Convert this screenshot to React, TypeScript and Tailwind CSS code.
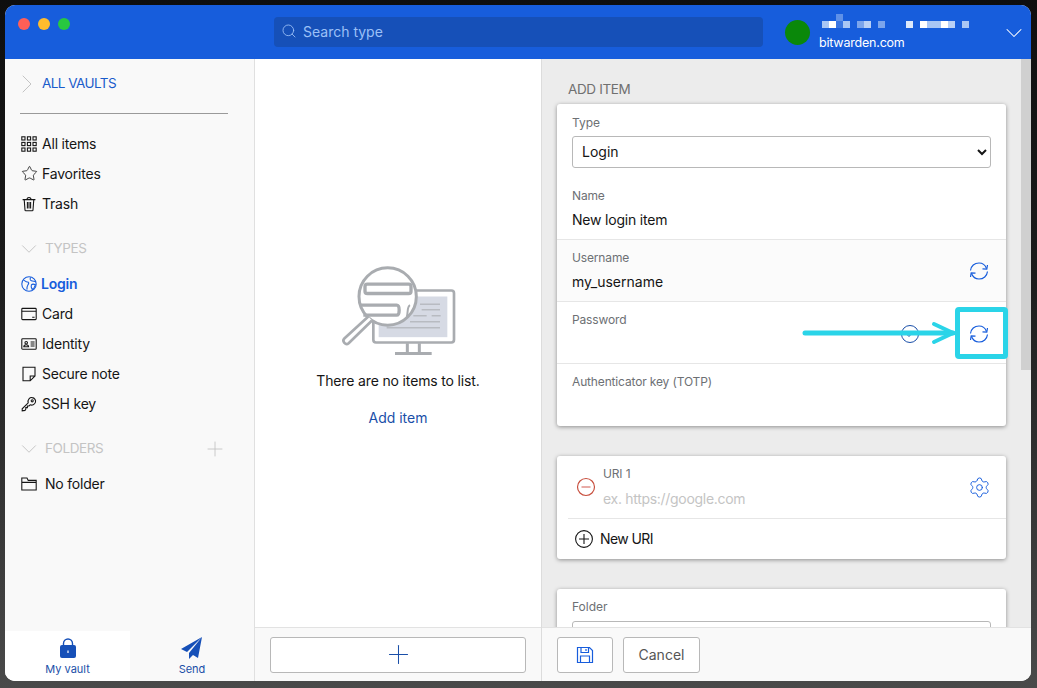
import { ReactNode } from "react";
import { Search, ChevronDown, ChevronRight, Plus, Star, Settings } from "lucide-react";

// Иконки в стиле bwi: тонкая обводка 20x20
function Ico({ children, size = 16, className = "" }: { children: ReactNode; size?: number; className?: string }) {
  return (
    <svg width={size} height={size} viewBox="0 0 20 20" fill="none" stroke="currentColor" strokeWidth="1.35" className={`shrink-0 ${className}`}>
      {children}
    </svg>
  );
}

const GridIcon = () => (
  <Ico>
    {[1, 8, 15].map((x) =>
      [1, 8, 15].map((y) => <rect key={`${x}-${y}`} x={x} y={y} width="4" height="4" />)
    )}
  </Ico>
);
const TrashIcon = () => (
  <Ico>
    <path d="M2 4.500h16M7.500 4.500c0-3.500 5-3.500 5 0M4 4.500l1 13c0 .6.500 1 1 1h8c.500 0 1-.4 1-1l1-13M8 7.500v8M10 7.500v8M12 7.500v8" />
  </Ico>
);
const GlobeIcon = () => (
  <Ico className="text-[#175ddc]">
    <circle cx="10" cy="10" r="9" />
    <path d="M3 5c2 1 3 2.500 5 2.500S10 9 9 10.500 7 13 7.500 17M12 2c-1 2-1 3 1 4s4 0 5 1M13 11c1-1 3-1 5 0-1 3-2 5-4 6-1-2-2-4-1-6z" />
  </Ico>
);
const CardIcon = () => (
  <Ico>
    <rect x="1" y="3" width="18" height="14" rx="1" />
    <path d="M1 6.500h18M14 14h3" />
  </Ico>
);
const IdIcon = () => (
  <Ico>
    <rect x="1" y="3.500" width="18" height="13" rx="1" />
    <circle cx="6.500" cy="8.500" r="1.600" />
    <path d="M3.500 13.500c0-3.500 6-3.500 6 0zM12 7.500h5M12 10h5M12 12.500h5" />
  </Ico>
);
const NoteIcon = () => (
  <Ico>
    <path d="M2.500 1.500h15v11l-6 6h-9zM17.500 12.500h-6v6" />
  </Ico>
);
const KeyIcon = () => (
  <Ico>
    <path d="M1.500 18.500v-2.500l7.500-7.500c-1-4 2-7 5-6.500 3 .3 5 3.500 4 6-1 2.800-4 4-6.500 3l-1.500 1.500h-2v2h-2v2l-1 1.500z" />
    <circle cx="14" cy="6" r="1.300" />
  </Ico>
);
const FolderIcon = () => (
  <Ico>
    <path d="M1 17.500V2.500h6.500L9 5.500h10v12zM1 8h18" />
  </Ico>
);

// Две дуги со стрелками, как у генератора пароля
const SyncIcon = () => (
  <svg width="20" height="20" viewBox="0 0 20 20" fill="none" stroke="#175ddc" strokeWidth="1.200" className="shrink-0">
    <path d="M1.500 9.500C2 5 5.500 2 10 2c3.500 0 6.200 2 7.500 5.500" />
    <path d="M18.500 10.500C18 15 14.500 18 10 18c-3.500 0-6.200-2-7.500-5.500" />
    <path d="M13.500 7.800l4.300.4.700-4.200" />
    <path d="M6.500 12.200l-4.300-.4-.7 4.200" />
  </svg>
);

function SideRow({ icon, label, active, gap = "gap-[5px]" }: { icon: ReactNode; label: string; active?: boolean; gap?: string }) {
  return (
    <div className={`flex h-[30px] items-center pb-[1px] pl-[16px] tracking-[-0.2px] ${gap} ${active ? "font-semibold text-[#175ddc]" : "text-[#151515]"}`}>
      {icon}
      <span>{label}</span>
    </div>
  );
}

function SectionHead({ label, action }: { label: string; action?: ReactNode }) {
  return (
    <div className="flex h-[30px] items-center pb-[1px] pl-[17px] pr-[27px] text-[#c4c4c4]">
      <ChevronDown size={26} strokeWidth={0.9} className="-ml-[6px] -mr-[6px] shrink-0" />
      <span className="ml-[9px] flex-1 text-[13.500px] tracking-[-0.4px]">{label}</span>
      {action}
    </div>
  );
}

function Field({ label, value, icons, tint, last, valueClass = "" }: { label: string; value?: string; icons?: ReactNode; tint?: boolean; last?: boolean; valueClass?: string }) {
  return (
    <div className={`flex h-[62px] items-center pl-[15px] pr-[17px] ${tint ? "bg-[#fbfbfb]" : ""} ${last ? "" : "border-b border-[#e6e6e6]"}`}>
      <div className="flex-1 self-start pt-[9px]">
        <div className="text-[12px] leading-[17px] tracking-[-0.15px] text-[#6d7074]">{label}</div>
        <div className={`mt-[6px] h-[20px] leading-[20px] text-[#151515] ${valueClass}`}>{value}</div>
      </div>
      {icons}
    </div>
  );
}

function Illustration() {
  return (
    <svg width="120" height="97" viewBox="120 40 360 290" fill="none" stroke="#a9acb0" strokeWidth="9" className="ml-[4px]">
      <rect x="220" y="122" width="242" height="156" rx="8" strokeWidth="8" />
      <rect x="236" y="140" width="206" height="122" fill="#d6dae4" stroke="none" />
      <path d="M322 280v30M358 280v30M285 311h110" />
      <path d="M360 163h60M365 180h55M340 198h40M395 198h27M330 216h90M260 234h160" stroke="#a9acb0" strokeWidth="3" />
      <circle cx="263" cy="140" r="86" fill="#fff" />
      <path d="M205 200l-72 66c-8 8 4 22 13 14l70-68" strokeWidth="8" fill="#fff" />
      <rect x="195" y="103" width="138" height="28" rx="7" strokeWidth="10" />
      <path d="M180 166h110c10 0 10 30 0 30h-100" strokeWidth="10" />
      <path d="M330 166c-10 5-5 25-10 35" strokeWidth="6" />
    </svg>
  );
}

export default function App() {
  return (
    <div className="relative h-[688px] w-[1037px] overflow-hidden bg-[linear-gradient(180deg,#0e0e0e_0px,#1c1c1c_40%,#4a4a4a_100%)] pb-[7px] pl-[5px] pr-[6px] pt-[5px] text-[14px] [font-family:Inter,sans-serif]">
      <div className="flex h-full flex-col overflow-hidden rounded-[10px] bg-white">
        {/* Header */}
        <header className="flex h-[54px] shrink-0 items-center bg-[#175ddc]">
          <div className="flex h-full w-[269px] shrink-0 gap-[8px] pl-[13px] pt-[13px]">
            <span className="h-[12px] w-[12px] rounded-full bg-[#ff5f57]" />
            <span className="h-[12px] w-[12px] rounded-full bg-[#febc2e]" />
            <span className="h-[12px] w-[12px] rounded-full bg-[#28c840]" />
          </div>
          <div className="flex h-[30px] w-[489px] shrink-0 items-center gap-[6px] rounded-[4px] bg-[#1650b8] pb-[2px] pl-[7px] text-[#9cc0f7]">
            <Search size={16} strokeWidth={1.300} />
            <span>Search type</span>
          </div>
          <div className="ml-[22px] h-[25px] w-[25px] shrink-0 rounded-full bg-[#0a880a]" />
          <div className="ml-[9px] flex-1">
            <svg width="150" height="14" viewBox="0 0 150 14" className="block">
              <rect x="3" y="7" width="7" height="7" fill="#a9c6f4" />
              <rect x="10" y="7" width="7" height="7" fill="#ffffff" />
              <rect x="17" y="0" width="7" height="7" fill="#5f91e8" />
              <rect x="17" y="7" width="7" height="7" fill="#3a76e2" />
              <rect x="24" y="7" width="7" height="7" fill="#a9c6f4" />
              <rect x="38" y="7" width="7" height="7" fill="#7ca5ec" />
              <rect x="45" y="7" width="7" height="7" fill="#b9d0f6" />
              <rect x="59" y="7" width="7" height="7" fill="#7ca5ec" />
              <rect x="87" y="7" width="7" height="7" fill="#dce8fb" />
              <rect x="101" y="7" width="7" height="7" fill="#ffffff" />
              <rect x="108" y="7" width="14" height="7" fill="#a9c6f4" />
              <rect x="122" y="7" width="7" height="7" fill="#ffffff" />
              <rect x="129" y="7" width="7" height="7" fill="#b9d0f6" />
              <rect x="143" y="7" width="7" height="7" fill="#a9c6f4" />
            </svg>
            <div className="mt-[6px] text-[12.500px] leading-[17px] tracking-[-0.2px] text-white">bitwarden.com</div>
          </div>
          <ChevronDown size={28} strokeWidth={0.9} className="mr-[3px] mt-[1px] text-white" />
        </header>

        <div className="flex min-h-0 flex-1">
          {/* Sidebar */}
          <aside className="flex w-[250px] shrink-0 flex-col border-r border-[#e0e0e0] bg-[#f9f9f9]">
            <div className="flex h-[50px] items-center pb-[1px] pl-[15px] text-[#1a5ccb]">
              <ChevronRight size={32} strokeWidth={0.75} className="-mx-[9px] shrink-0 text-[#c4c4c4]" />
              <span className="ml-[8px] text-[13.500px] tracking-[-0.55px]">ALL VAULTS</span>
            </div>
            <div className="ml-[15px] mt-[4px] h-px w-[208px] bg-[#9a9a9a]" />
            <div className="mt-[15px]">
              <SideRow icon={<GridIcon />} label="All items" />
              <SideRow icon={<Star size={17} strokeWidth={1.100} className="shrink-0" />} label="Favorites" gap="gap-[4px]" />
              <SideRow icon={<TrashIcon />} label="Trash" />
            </div>
            <div className="mt-[15px]">
              <SectionHead label="TYPES" />
            </div>
            <div className="mt-[5px]">
              <SideRow icon={<GlobeIcon />} label="Login" active gap="gap-[4px]" />
              <SideRow icon={<CardIcon />} label="Card" />
              <SideRow icon={<IdIcon />} label="Identity" />
              <SideRow icon={<NoteIcon />} label="Secure note" />
              <SideRow icon={<KeyIcon />} label="SSH key" />
            </div>
            <div className="mt-[15px]">
              <SectionHead label="FOLDERS" action={<Plus size={24} strokeWidth={0.9} className="shrink-0" />} />
            </div>
            <div className="mt-[5px]">
              <SideRow icon={<FolderIcon />} label="No folder" gap="gap-[8px]" />
            </div>
            <nav className="mt-auto flex h-[50px] text-[11px] text-[#1a4fa8]">
              <div className="flex w-[125px] flex-col items-center justify-end bg-white pb-[4px]">
                <svg width="18" height="22" viewBox="0 0 18 22" className="mb-[3px]">
                  <path d="M4.500 9V6.500a4.500 4.500 0 0 1 9 0V9" fill="none" stroke="#1650b8" strokeWidth="1.400" />
                  <rect x="1" y="8" width="16" height="13" rx="2" fill="#1650b8" />
                  <rect x="8.400" y="13.500" width="1.200" height="2.500" fill="#fff" />
                </svg>
                <span className="leading-[15px]">My vault</span>
              </div>
              <div className="flex flex-1 flex-col items-center justify-end pb-[4px]">
                <svg width="22" height="22" viewBox="0 0 22 22" className="mb-[3px]">
                  <path d="M21 0L0 12l6 3zM21 0L8 16v6l4-4 5 3z" fill="#1650b8" />
                </svg>
                <span className="leading-[15px]">Send</span>
              </div>
            </nav>
          </aside>

          {/* Item list */}
          <section className="flex w-[286px] shrink-0 flex-col">
            <div className="flex flex-1 flex-col items-center pt-[204px]">
              <Illustration />
              <div className="mt-[11px] leading-[20px] tracking-[-0.15px] text-[#151515]">There are no items to list.</div>
              <div className="mt-[17px] leading-[20px] text-[#1a4fa8]">Add item</div>
            </div>
            <div className="flex h-[54px] shrink-0 items-center border-t border-[#e2e2e2] bg-[#f9f9f9] px-[15px]">
              <div className="flex h-[36px] flex-1 items-center justify-center rounded-[3px] border border-[#b8b8b8] bg-white text-[#1a4fa8]">
                <Plus size={31} strokeWidth={0.8} />
              </div>
            </div>
          </section>

          {/* Add item pane */}
          <section className="flex min-w-0 flex-1 flex-col border-l border-[#dcdcdc] bg-[#ececec]">
            <div className="flex min-h-0 flex-1">
              <div className="min-w-0 flex-1 overflow-hidden pl-[15px] pr-[15px]">
                <div className="mt-[20px] h-[20px] pl-[11px] text-[13.500px] leading-[20px] tracking-[-0.35px] text-[#707070]">ADD ITEM</div>
                <div className="mt-[5px] overflow-hidden rounded-[3px] bg-white shadow-[0_1px_4px_rgba(0,0,0,0.4)]">
                  <div className="h-[74px] px-[15px] pt-[10px]">
                    <div className="text-[12px] leading-[17px] text-[#6d7074]">Type</div>
                    <select defaultValue="Login" className="mt-[5px] h-[32px] w-full appearance-auto rounded-[3px] border border-[#b8b8b8] bg-white pb-[1px] pl-[5px] text-[14px] text-[#151515]">
                      <option>Login</option>
                    </select>
                  </div>
                  <Field label="Name" value="New login item" valueClass="tracking-[-0.2px]" />
                  <Field label="Username" value="my_username" tint icons={<SyncIcon />} />
                  <Field
                    label="Password"
                    icons={
                      <div className="flex items-center gap-[50px] pt-[2px] text-[#1a4fa8]">
                        <svg width="18" height="18" viewBox="0 0 18 18" fill="none" stroke="currentColor" strokeWidth="1">
                          <circle cx="9" cy="9" r="8.500" />
                          <path d="M5.500 9l2.500 2.500 4.500-5" />
                        </svg>
                        <SyncIcon />
                      </div>
                    }
                  />
                  <Field label="Authenticator key (TOTP)" last />
                </div>

                <div className="mt-[30px] overflow-hidden rounded-[3px] bg-white shadow-[0_1px_4px_rgba(0,0,0,0.4)]">
                  <div className="ml-[11px] flex h-[63px] items-center border-b border-[#e6e6e6] pr-[15px]">
                    <svg width="20" height="20" viewBox="0 0 20 20" fill="none" className="ml-[8px] shrink-0">
                      <circle cx="10" cy="10" r="8.500" stroke="#c8503f" strokeWidth="1.200" />
                      <path d="M5.500 10h9" stroke="#e0908a" strokeWidth="1.500" />
                    </svg>
                    <div className="ml-[7px] flex-1 self-start pt-[9px]">
                      <div className="text-[12px] leading-[17px] tracking-[-0.15px] text-[#6d7074]">URI 1</div>
                      <div className="mt-[7px] leading-[20px] tracking-[-0.3px] text-[#c4c4c4]">ex. https://google.com</div>
                    </div>
                    <Settings size={23} strokeWidth={1} className="text-[#175ddc]" />
                  </div>
                  <div className="flex h-[40px] items-center gap-[7px] pb-[1px] pl-[18px] tracking-[-0.6px] text-[#151515]">
                    <svg width="18" height="18" viewBox="0 0 18 18" fill="none" stroke="currentColor" strokeWidth="1.100">
                      <circle cx="9" cy="9" r="8.400" />
                      <path d="M9 4v10M4 9h10" />
                    </svg>
                    <span>New URI</span>
                  </div>
                </div>

                <div className="mt-[30px] h-[100px] rounded-[3px] bg-white px-[15px] pt-[9px] shadow-[0_1px_4px_rgba(0,0,0,0.4)]">
                  <div className="text-[12px] leading-[17px] text-[#6d7074]">Folder</div>
                  <div className="mt-[6px] h-[31px] rounded-[3px] border border-[#b8b8b8]" />
                </div>
              </div>
              <div className="w-[10px] shrink-0">
                <div className="h-[311px] bg-[#d0d0d0]" />
              </div>
            </div>
            <div className="z-10 flex h-[54px] shrink-0 items-center gap-[10px] border-t border-[#e2e2e2] bg-[#f9f9f9] pl-[15px]">
              <div className="flex h-[36px] w-[56px] items-center justify-center rounded-[3px] border border-[#b8b8b8] bg-white text-[#175ddc]">
                <svg width="18" height="18" viewBox="0 0 18 18" fill="none" stroke="currentColor" strokeWidth="1.200">
                  <path d="M1.500 1.500h12l3 3v12h-15zM5 1.500v5h7.500v-5M4.500 16.500v-6.500h9v6.500M10 3v2" />
                </svg>
              </div>
              <div className="flex h-[36px] w-[77px] items-center justify-center rounded-[3px] border border-[#b8b8b8] bg-white pb-[1px] text-[#555]">Cancel</div>
            </div>
          </section>
        </div>
      </div>

      {/* Аннотация поверх скриншота */}
      <svg width="160" height="24" viewBox="0 0 160 24" fill="none" stroke="#2ad4e8" strokeLinecap="round" className="absolute left-[801px] top-[321px]">
        <path d="M4 12h148" strokeWidth="5" />
        <path d="M133 3l19 9-19 9" strokeWidth="4" />
      </svg>
      <div className="absolute left-[955px] top-[307px] h-[52px] w-[53px] rounded-[4px] border-[5px] border-[#2ad4e8]" />
    </div>
  );
}
